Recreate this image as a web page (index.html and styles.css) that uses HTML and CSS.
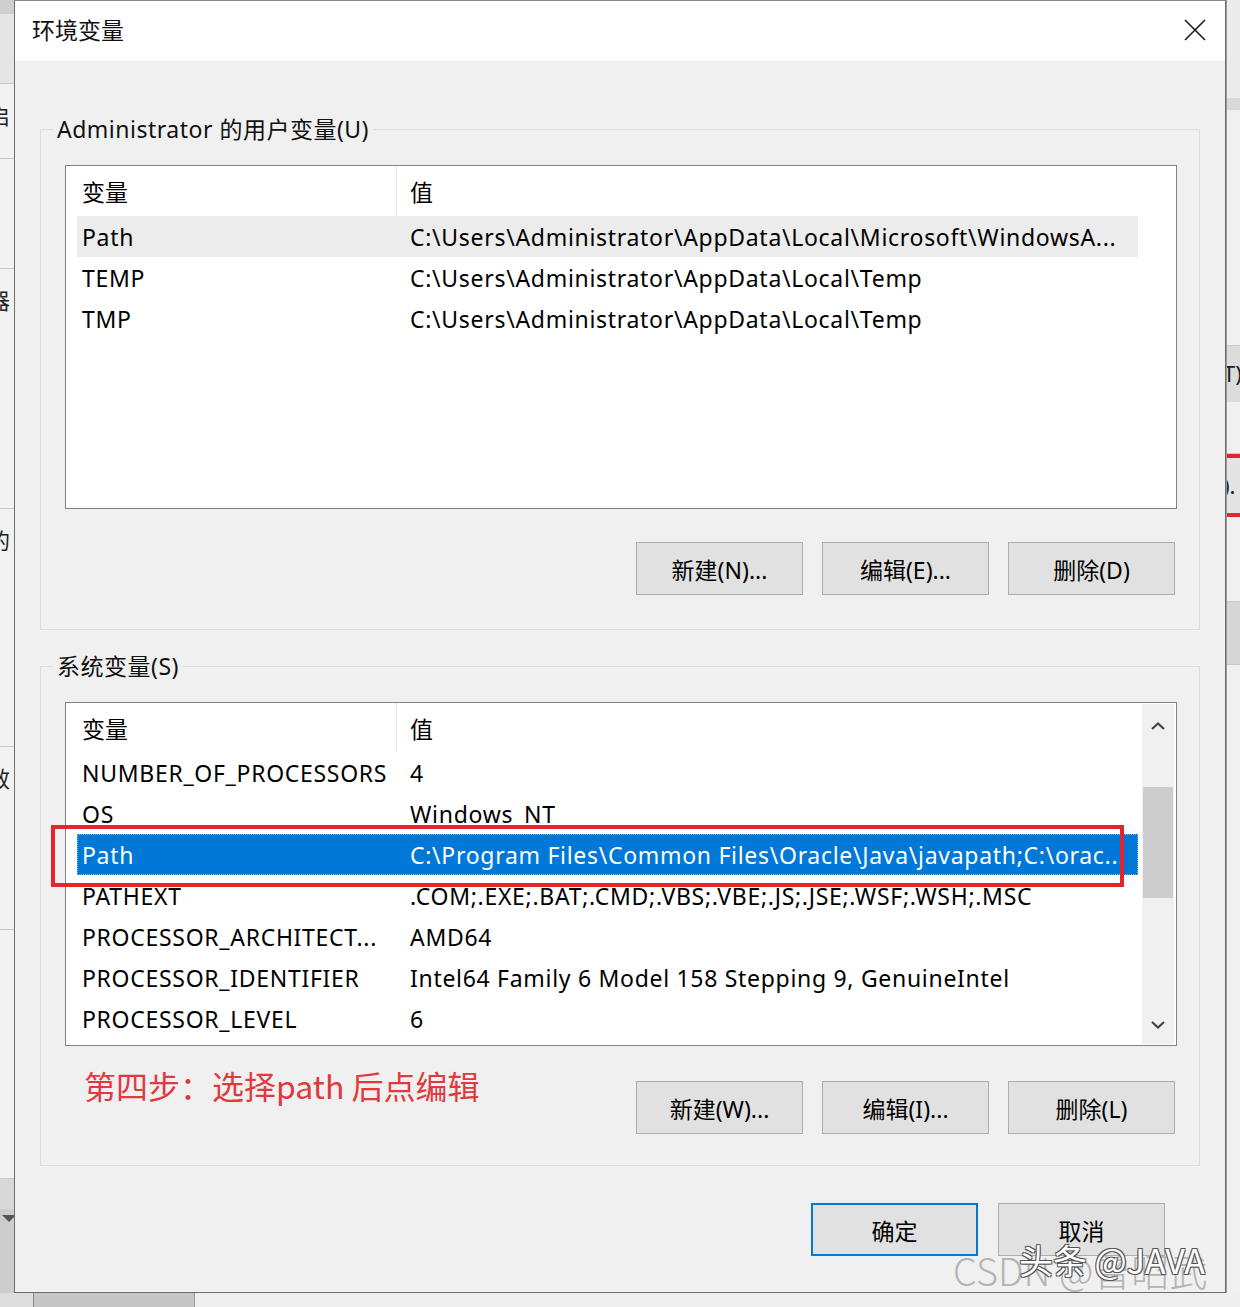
FILE: index.html
```html
<!DOCTYPE html>
<html lang="zh-CN">
<head>
    <meta charset="UTF-8">
    <meta name="viewport" content="width=device-width, initial-scale=1.0">
    <title>环境变量</title>
    <link rel="stylesheet" href="styles.css">
</head>
<body>
    <div class="desktop">
        <div class="side side-left">
            <div class="bg-band top"></div>
            <div class="bg-cell l1"></div>
            <div class="bg-cell l2"><span class="frag">启</span></div>
            <div class="bg-cell l3"><span class="frag">，</span></div>
            <div class="bg-cell l4"><span class="frag">器</span></div>
            <div class="bg-cell l5"><span class="frag">的</span></div>
            <div class="bg-cell l6"><span class="frag">效</span></div>
            <div class="bg-cell l7"></div>
            <div class="bg-band grey"></div>
            <div class="bg-cell drop"><span class="tri"></span></div>
        </div>

        <div class="dialog">
            <div class="titlebar">
                <span class="title">环境变量</span>
                <svg class="close" width="22" height="22" viewBox="0 0 22 22">
                    <path d="M1 1 L21 21 M21 1 L1 21" stroke="#1a1a1a" stroke-width="1.6" fill="none"/>
                </svg>
            </div>

            <div class="dialog-body">
                <fieldset class="group group-user">
                    <legend>Administrator 的用户变量(U)</legend>
                    <div class="listview">
                        <div class="list-inner">
                            <div class="list-head">
                                <div class="head-name">变量</div>
                                <div class="head-value">值</div>
                            </div>
                            <div class="row soft">
                                <div class="cell-name">Path</div>
                                <div class="cell-value">C:\Users\Administrator\AppData\Local\Microsoft\WindowsA...</div>
                            </div>
                            <div class="row">
                                <div class="cell-name">TEMP</div>
                                <div class="cell-value">C:\Users\Administrator\AppData\Local\Temp</div>
                            </div>
                            <div class="row">
                                <div class="cell-name">TMP</div>
                                <div class="cell-value">C:\Users\Administrator\AppData\Local\Temp</div>
                            </div>
                        </div>
                    </div>
                    <div class="btn-row">
                        <button class="btn">新建(N)...</button>
                        <button class="btn">编辑(E)...</button>
                        <button class="btn">删除(D)</button>
                    </div>
                </fieldset>

                <fieldset class="group group-system">
                    <legend>系统变量(S)</legend>
                    <div class="list-wrap">
                        <div class="listview">
                            <div class="list-inner">
                                <div class="list-head">
                                    <div class="head-name">变量</div>
                                    <div class="head-value">值</div>
                                </div>
                                <div class="row">
                                    <div class="cell-name">NUMBER_OF_PROCESSORS</div>
                                    <div class="cell-value">4</div>
                                </div>
                                <div class="row">
                                    <div class="cell-name">OS</div>
                                    <div class="cell-value">Windows_NT</div>
                                </div>
                                <div class="row selected">
                                    <div class="cell-name">Path</div>
                                    <div class="cell-value">C:\Program Files\Common Files\Oracle\Java\javapath;C:\orac...</div>
                                </div>
                                <div class="row">
                                    <div class="cell-name">PATHEXT</div>
                                    <div class="cell-value">.COM;.EXE;.BAT;.CMD;.VBS;.VBE;.JS;.JSE;.WSF;.WSH;.MSC</div>
                                </div>
                                <div class="row">
                                    <div class="cell-name">PROCESSOR_ARCHITECT...</div>
                                    <div class="cell-value">AMD64</div>
                                </div>
                                <div class="row">
                                    <div class="cell-name">PROCESSOR_IDENTIFIER</div>
                                    <div class="cell-value">Intel64 Family 6 Model 158 Stepping 9, GenuineIntel</div>
                                </div>
                                <div class="row">
                                    <div class="cell-name">PROCESSOR_LEVEL</div>
                                    <div class="cell-value">6</div>
                                </div>
                            </div>
                            <div class="scrollbar">
                                <div class="sb-arrow up">
                                    <svg width="14" height="8" viewBox="0 0 14 8"><path d="M1 7 L7 1.5 L13 7" stroke="#444" stroke-width="2.2" fill="none"/></svg>
                                </div>
                                <div class="sb-track"><div class="sb-thumb"></div></div>
                                <div class="sb-arrow down">
                                    <svg width="14" height="8" viewBox="0 0 14 8"><path d="M1 1 L7 6.5 L13 1" stroke="#444" stroke-width="2.2" fill="none"/></svg>
                                </div>
                            </div>
                        </div>
                        <div class="red-mark"></div>
                    </div>
                    <div class="btn-row">
                        <span class="note">第四步：选择path 后点编辑</span>
                        <button class="btn">新建(W)...</button>
                        <button class="btn">编辑(I)...</button>
                        <button class="btn">删除(L)</button>
                    </div>
                </fieldset>

                <div class="dialog-actions">
                    <button class="btn primary">确定</button>
                    <button class="btn">取消</button>
                </div>
            </div>

            <div class="wm wm-csdn">CSDN @曾昭武</div>
            <div class="wm wm-tt">头条 @JAVA</div>
        </div>

        <div class="side side-right">
            <div class="bg-cell r1"></div>
            <div class="bg-band thin"></div>
            <div class="bg-cell r2"></div>
            <div class="bg-band tall"><span class="frag-r">T)</span></div>
            <div class="bg-cell r3"></div>
            <div class="bg-band red"></div>
            <div class="bg-cell r4"><span class="frag-r">).</span></div>
            <div class="bg-band red"></div>
            <div class="bg-cell r5"></div>
            <div class="bg-band tall2"></div>
            <div class="bg-cell"></div>
        </div>

        <div class="bottom-strip">
            <div class="bs-a"></div>
            <div class="bs-b"></div>
            <div class="bs-c"></div>
        </div>
    </div>
</body>
</html>
```

FILE: styles.css
```css
:root {
    --face: #f0f0f0;
    --btn-bg: #e1e1e1;
    --btn-border: #adadad;
    --select: #0078d7;
    --mark: #e3262d;
}

* {
    box-sizing: border-box;
}

body {
    margin: 0;
    font-family: "Noto Sans", "Noto Sans CJK SC", sans-serif;
    font-size: 23px;
    color: #000;
    background: #d6d6d6;
}

.desktop {
    display: grid;
    grid-template-columns: 14px 1212px 14px;
    grid-template-rows: 1293px 14px;
    width: 1240px;
    height: 1307px;
    overflow: hidden;
}

/* background window pieces */
.side {
    display: flex;
    flex-direction: column;
    overflow: hidden;
    background: #f2f2f2;
}

.bg-cell {
    border-bottom: 1px solid #c9c9c9;
    overflow: hidden;
    flex-shrink: 0;
}

.bg-band {
    flex-shrink: 0;
}

.side-left .bg-band.top {
    height: 14px;
    background: #cfcfcf;
}

.side-left .l1 { height: 70px; background: #e6e6e6; }
.side-left .l2 { height: 75px; }
.side-left .l3 { height: 110px; }
.side-left .l4 { height: 240px; }
.side-left .l5 { height: 238px; }
.side-left .l6 { height: 183px; }
.side-left .l7 { height: 249px; }

.side-left .bg-band.grey {
    height: 30px;
    background: #d8d8d8;
}

.side-left .drop {
    height: 200px;
    border: none;
    background: #cdcdcd;
}

.frag {
    display: block;
    margin-left: -12px;
    margin-top: 18px;
    font-size: 22px;
    line-height: 26px;
    color: #222;
}

.tri {
    display: block;
    width: 0;
    height: 0;
    margin: 6px 0 0 2px;
    border-left: 7px solid transparent;
    border-right: 7px solid transparent;
    border-top: 7px solid #555;
}

.side-right {
    background: #f0f0f0;
    border-left: 1px solid #9a9a9a;
}

.side-right .r1 { height: 98px; background: #ebebeb; border: none; }
.side-right .bg-band.thin { height: 12px; background: #d8d8d8; }
.side-right .r2 { height: 236px; }
.side-right .bg-band.tall { height: 56px; background: #dcdcdc; }
.side-right .r3 { height: 52px; }
.side-right .bg-band.red { height: 4px; background: var(--mark); }
.side-right .r4 { height: 55px; background: #e4e4e4; border: none; }
.side-right .r5 { height: 85px; }
.side-right .bg-band.tall2 { height: 62px; background: #d6d6d6; }

.frag-r {
    display: block;
    margin-left: -4px;
    margin-top: 14px;
    font-size: 22px;
    line-height: 26px;
    color: #222;
}

.bottom-strip {
    grid-column: 1 / 4;
    display: flex;
}

.bs-a {
    width: 34px;
    background: #dedede;
    border-right: 1px solid #8a8a8a;
}

.bs-b {
    width: 161px;
    background: #c6c6c6;
    border-right: 1px solid #9a9a9a;
}

.bs-c {
    flex: 1;
    background: #efefef;
}

/* dialog */
.dialog {
    position: relative;
    background: var(--face);
    border: 1px solid #6d6d6d;
    border-top-color: #8a8a8a;
    display: flex;
    flex-direction: column;
}

.titlebar {
    height: 60px;
    background: #fff;
    display: flex;
    align-items: center;
    justify-content: space-between;
    padding: 0 19px 0 17px;
}

.title {
    font-size: 23px;
    color: #111;
    margin-top: -5px;
}

.close {
    margin-top: -3px;
}

.dialog-body {
    padding: 0 25px;
}

.group {
    margin: 0;
    border: 1px solid #dcdcdc;
    padding: 21px 22px 34px 24px;
    min-width: 0;
}

.group-user {
    margin-top: 53px;
}

.group-system {
    margin-top: 21px;
    padding-bottom: 31px;
}

.group legend {
    margin-left: -12px;
    padding: 0 4px;
    line-height: 30px;
    font-size: 23px;
    letter-spacing: 0.5px;
    color: #111;
}

.list-wrap {
    position: relative;
}

.listview {
    height: 344px;
    background: #fff;
    border: 1px solid #828282;
    display: flex;
    overflow: hidden;
}

.list-inner {
    width: 1076px;
    flex-shrink: 0;
}

.list-head {
    display: flex;
    height: 49px;
    align-items: center;
}

.group-user .list-head {
    height: 50px;
}

.head-name {
    width: 331px;
    padding-left: 16px;
    height: 100%;
    display: flex;
    align-items: center;
    border-right: 1px solid #e5e5e5;
}

.head-value {
    padding-left: 13px;
}

.row {
    display: flex;
    height: 41px;
    align-items: center;
    margin: 0 4px 0 11px;
    white-space: nowrap;
    letter-spacing: 0.7px;
}

.row.soft {
    background: #ececec;
}

.row.selected {
    background: var(--select);
    color: #fff;
    outline: 1px dotted #7fb9e8;
    outline-offset: -1px;
}

.cell-name {
    width: 328px;
    padding-left: 5px;
    overflow: hidden;
}

.cell-value {
    padding-left: 5px;
}

.scrollbar {
    flex: 1;
    margin: 1px 2px 1px 0;
    background: var(--face);
    display: flex;
    flex-direction: column;
}

.sb-arrow {
    display: flex;
    align-items: center;
    justify-content: center;
}

.sb-arrow.up {
    height: 44px;
}

.sb-arrow.down {
    height: 38px;
}

.sb-track {
    flex: 1;
    padding: 39px 1px 0;
}

.sb-thumb {
    height: 111px;
    background: #cdcdcd;
}

.red-mark {
    position: absolute;
    left: -14px;
    top: 123px;
    width: 1073px;
    height: 62px;
    border: 4px solid var(--mark);
}

.btn-row {
    display: flex;
    justify-content: flex-end;
    align-items: flex-start;
    gap: 19px;
    margin-top: 33px;
    padding-right: 2px;
}

.group-system .btn-row {
    margin-top: 35px;
}

.note {
    margin: -16px auto 0 19px;
    font-family: "Noto Sans CJK SC", sans-serif;
    font-size: 32px;
    line-height: 40px;
    color: #e0393e;
}

.btn {
    width: 167px;
    height: 53px;
    background: var(--btn-bg);
    border: 1px solid var(--btn-border);
    font-family: "Noto Sans", "Noto Sans CJK SC", sans-serif;
    font-size: 23px;
    color: #000;
    padding: 0;
}

.btn.primary {
    border: 2px solid var(--select);
}

.dialog-actions {
    display: flex;
    justify-content: flex-end;
    gap: 20px;
    margin-top: 37px;
    padding-right: 35px;
}

/* watermarks */
.wm {
    position: absolute;
    white-space: nowrap;
    font-family: "Noto Sans CJK SC", sans-serif;
}

.wm-csdn {
    left: 938px;
    top: 1246px;
    font-size: 38px;
    line-height: 46px;
    color: #b4b4b4;
    font-weight: 300;
}

.wm-tt {
    left: 1004px;
    top: 1238px;
    font-size: 34px;
    line-height: 42px;
    color: #fff;
    text-shadow: 1px 1px 0 #555, -1px -1px 0 #555, 1px -1px 0 #555, -1px 1px 0 #555;
}
```
